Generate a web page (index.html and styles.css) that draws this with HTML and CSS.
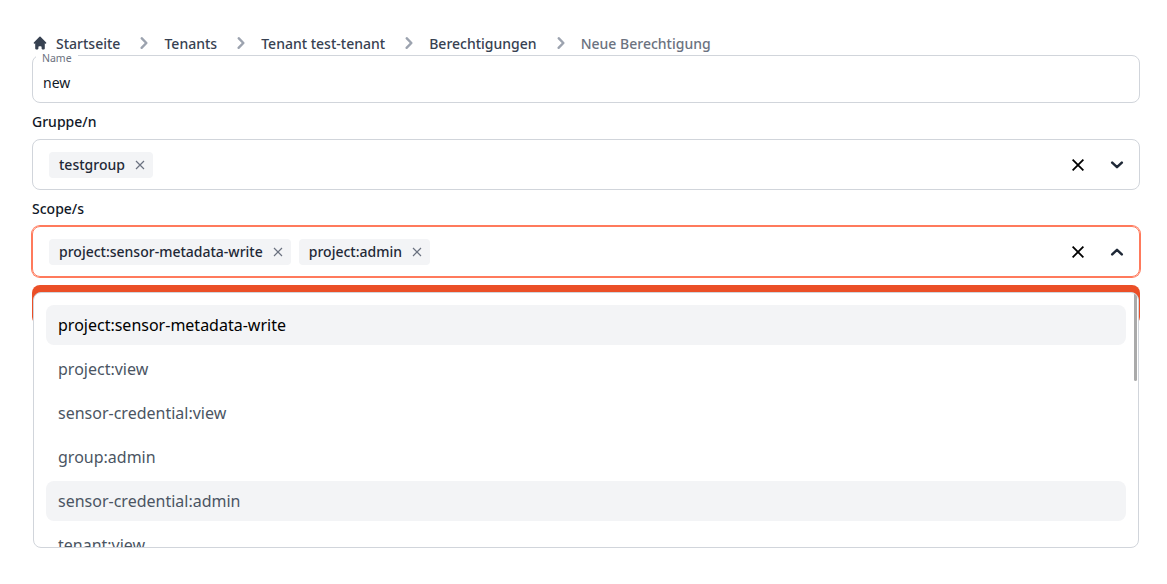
FILE: index.html
```html
<!DOCTYPE html>
<html lang="de">
<head>
<meta charset="utf-8">
<title>Neue Berechtigung</title>
<link rel="stylesheet" href="styles.css">
</head>
<body>
<main class="page">
  <nav class="breadcrumb">
    <svg class="home" viewBox="0 0 20 20"><path d="M10.700 2.300a1 1 0 0 0-1.400 0l-7 7a1 1 0 0 0 1.400 1.400L4 10.400V17a1 1 0 0 0 1 1h2a1 1 0 0 0 1-1v-2a1 1 0 0 1 1-1h2a1 1 0 0 1 1 1v2a1 1 0 0 0 1 1h2a1 1 0 0 0 1-1v-6.600l.3.3a1 1 0 0 0 1.400-1.400z"/></svg>
    <a>Startseite</a>
    <svg class="sep" viewBox="0 0 20 20"><path d="M7.300 14.700a1 1 0 0 1 0-1.400L10.600 10 7.300 6.700a1 1 0 0 1 1.400-1.400l4 4a1 1 0 0 1 0 1.400l-4 4a1 1 0 0 1-1.400 0z"/></svg>
    <a>Tenants</a>
    <svg class="sep" viewBox="0 0 20 20"><path d="M7.300 14.700a1 1 0 0 1 0-1.400L10.600 10 7.300 6.700a1 1 0 0 1 1.400-1.400l4 4a1 1 0 0 1 0 1.400l-4 4a1 1 0 0 1-1.400 0z"/></svg>
    <a>Tenant test-tenant</a>
    <svg class="sep" viewBox="0 0 20 20"><path d="M7.300 14.700a1 1 0 0 1 0-1.400L10.600 10 7.300 6.700a1 1 0 0 1 1.400-1.400l4 4a1 1 0 0 1 0 1.400l-4 4a1 1 0 0 1-1.400 0z"/></svg>
    <a>Berechtigungen</a>
    <svg class="sep" viewBox="0 0 20 20"><path d="M7.300 14.700a1 1 0 0 1 0-1.400L10.600 10 7.300 6.700a1 1 0 0 1 1.400-1.400l4 4a1 1 0 0 1 0 1.400l-4 4a1 1 0 0 1-1.400 0z"/></svg>
    <span class="current">Neue Berechtigung</span>
  </nav>

  <div class="text-field">
    <span class="floating">Name</span>
    <span>new</span>
  </div>

  <div class="label">Gruppe/n</div>
  <div class="select">
    <span class="tag">testgroup<svg class="remove" viewBox="0 0 10 10"><path d="M1 1l8 8M9 1l-8 8"/></svg></span>
    <svg class="clear" viewBox="0 0 12 12"><path d="M.6.6l10.800 10.800M11.400.6L.6 11.400"/></svg>
    <svg class="chevron" viewBox="0 0 14 8"><path d="M2.200 1.700l4.800 4.500 4.800-4.500"/></svg>
  </div>

  <div class="label">Scope/s</div>
  <div class="select focused">
    <span class="tag">project:sensor-metadata-write<svg class="remove" viewBox="0 0 10 10"><path d="M1 1l8 8M9 1l-8 8"/></svg></span>
    <span class="tag">project:admin<svg class="remove" viewBox="0 0 10 10"><path d="M1 1l8 8M9 1l-8 8"/></svg></span>
    <svg class="clear" viewBox="0 0 12 12"><path d="M.6.6l10.800 10.800M11.400.6L.6 11.400"/></svg>
    <svg class="chevron" viewBox="0 0 14 8"><path d="M2.200 6.300l4.800-4.500 4.800 4.500"/></svg>
  </div>

  <div class="submit">
    <div class="menu">
      <div class="option first">project:sensor-metadata-write</div>
      <div class="option">project:view</div>
      <div class="option">sensor-credential:view</div>
      <div class="option">group:admin</div>
      <div class="option hover">sensor-credential:admin</div>
      <div class="option">tenant:view</div>
      <div class="thumb"></div>
    </div>
  </div>
</main>
</body>
</html>
```
FILE: styles.css
```css
* { box-sizing: border-box; }
body {
  margin: 0;
  min-height: 584px;
  background: #fff;
  color: #111827;
  font: 500 14px/20px "Noto Sans", sans-serif;
}
.page {
  width: 1108px;
  min-height: 584px;
  margin-left: 32px;
  padding-top: 34px;
}
.breadcrumb {
  display: flex;
  align-items: center;
  height: 20px;
  margin-bottom: 1px;
  color: #374151;
  white-space: nowrap;
}
.home { width: 16px; height: 16px; margin: 0 8px 2px 0; fill: #374151; }
.sep { width: 24px; height: 24px; margin: 0 8px 2px 12.100px; fill: #9ca3af; }
.current { color: #6b7280; }
.text-field {
  position: relative;
  height: 48px;
  border: 1px solid #d1d5db;
  border-radius: 8px;
  padding: 17px 10px 0;
  font-weight: 400;
}
.floating {
  position: absolute;
  left: 3px;
  top: -5px;
  padding: 0 6px;
  background: #fff;
  color: #6b7280;
  font-size: 10.500px;
  line-height: 15px;
}
.label { height: 36px; padding-top: 9px; }
.select {
  display: flex;
  align-items: center;
  gap: 8px;
  height: 51px;
  border: 1px solid #d1d5db;
  border-radius: 8px;
  padding: 0 15px 0 16px;
}
.focused { border-color: #ff7a5c; box-shadow: 0 0 0 1px #ff7a5c; }
.tag {
  display: flex;
  align-items: center;
  height: 26px;
  padding: 0 8px 0 10px;
  border-radius: 4px;
  background: #f3f4f6;
  color: #1f2937;
}
.remove {
  width: 10px;
  height: 10px;
  margin-left: 10px;
  fill: none;
  stroke: #6b7280;
  stroke-width: 1.2;
}
.clear {
  width: 12px;
  height: 12px;
  margin-left: auto;
  margin-right: 18px;
  fill: none;
  stroke: #000;
  stroke-width: 1.8;
}
.chevron {
  width: 14px;
  height: 8px;
  fill: none;
  stroke: #1f2937;
  stroke-width: 2.5;
  stroke-linecap: round;
  stroke-linejoin: round;
}
.submit {
  position: relative;
  height: 40px;
  margin-top: 8px;
  border-radius: 8px;
  background: #eb4f27;
}
.menu {
  position: absolute;
  top: 7px;
  left: 1px;
  width: 1106px;
  height: 256px;
  overflow: hidden;
  padding: 12px;
  border: 1px solid #d1d5db;
  border-radius: 8px;
  background: #fff;
  color: #4b5563;
  font-size: 16px;
  font-weight: 400;
  line-height: 24px;
}
.option {
  width: 1080px;
  height: 40px;
  margin-bottom: 4px;
  padding: 8px 12px;
  border-radius: 8px;
}
.first { background: #f3f4f6; color: #000; }
.hover { background: #f3f4f6; }
.thumb {
  position: absolute;
  top: 0;
  right: 1px;
  width: 3px;
  height: 88px;
  border-radius: 2px;
  background: #aaa;
}
```
